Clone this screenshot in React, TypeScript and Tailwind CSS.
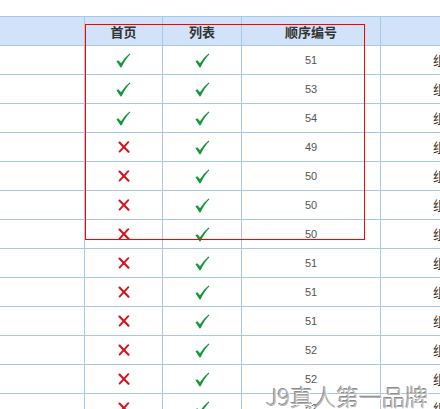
import React from "react";

const Check = () => (
  <svg width="15" height="15" viewBox="0 0 15 15" className="block">
    <path d="M0.5 8.2 L2.3 7.2 L5 10.2 Q8.5 4.5 13.6 0.4 L14.4 1.2 Q9.5 6 5.6 14.2 L4.6 14.4 Z" fill="#14963a" />
  </svg>
);

const Cross = () => (
  <svg width="12" height="12" viewBox="0 0 12 12" className="block">
    <path d="M1.5 1.5 L10.5 10.8" stroke="#d8121b" strokeWidth="2.1" strokeLinecap="round" />
    <path d="M10.3 1.2 L1.6 10.6" stroke="#d8121b" strokeWidth="1.9" strokeLinecap="round" />
  </svg>
);

const rows: { home: boolean; list: boolean; num: string }[] = [
  { home: true, list: true, num: "51" },
  { home: true, list: true, num: "53" },
  { home: true, list: true, num: "54" },
  { home: false, list: true, num: "49" },
  { home: false, list: true, num: "50" },
  { home: false, list: true, num: "50" },
  { home: false, list: true, num: "50" },
  { home: false, list: true, num: "51" },
  { home: false, list: true, num: "51" },
  { home: false, list: true, num: "51" },
  { home: false, list: true, num: "52" },
  { home: false, list: true, num: "52" },
  { home: false, list: true, num: "52" },
];

export default function App() {
  return (
    <div className="relative w-[440px] h-[409px] overflow-hidden bg-white font-['Liberation_Sans','Noto_Sans_CJK_SC',sans-serif]">
      <div className="h-[16px]" />
      <div className="w-[640px]">
        <div className="flex h-[30px] bg-[#d2e3f9] border-y border-[#a9c8e8] text-[13px] font-bold text-[#333] font-['Noto_Sans_CJK_SC',sans-serif]">
          <div className="w-[85px] border-r border-[#a9c8e8]" />
          <div className="w-[78px] border-r border-[#a9c8e8] flex items-center justify-center pt-[2px]">首页</div>
          <div className="w-[79px] border-r border-[#a9c8e8] flex items-center justify-center pt-[2px]">列表</div>
          <div className="w-[139px] border-r border-[#a9c8e8] flex items-center justify-center pt-[2px]">顺序编号</div>
          <div className="flex-1" />
        </div>
        {rows.map((r, i) => (
          <div key={i} className="flex h-[29px] border-b border-[#a9c8e8]">
            <div className="w-[85px] border-r border-[#a9c8e8]" />
            <div className="w-[78px] border-r border-[#a9c8e8] flex items-center justify-center">
              {r.home ? <Check /> : <Cross />}
            </div>
            <div className="w-[79px] border-r border-[#a9c8e8] flex items-center justify-center">
              {r.list ? <Check /> : <Cross />}
            </div>
            <div className="w-[139px] border-r border-[#a9c8e8] flex items-center justify-center text-[11px] text-[#555]">
              {r.num}
            </div>
            <div className="flex-1 flex items-center pl-[52px] text-[13px] text-[#333] font-['Noto_Sans_CJK_SC',sans-serif]">
              组图
            </div>
          </div>
        ))}
      </div>
      <div className="absolute left-[85px] top-[24px] w-[280px] h-[216px] border border-[#ff0000]" />
      <div className="absolute left-[266px] top-[385px] text-[23px] leading-none whitespace-nowrap text-[#b4b4b4] font-['Noto_Sans_CJK_SC',sans-serif] font-light [text-shadow:1px_1px_0_#ffffff,-1px_-1px_0_#8c8c8c]">
        J9真人第一品牌
      </div>
    </div>
  );
}
